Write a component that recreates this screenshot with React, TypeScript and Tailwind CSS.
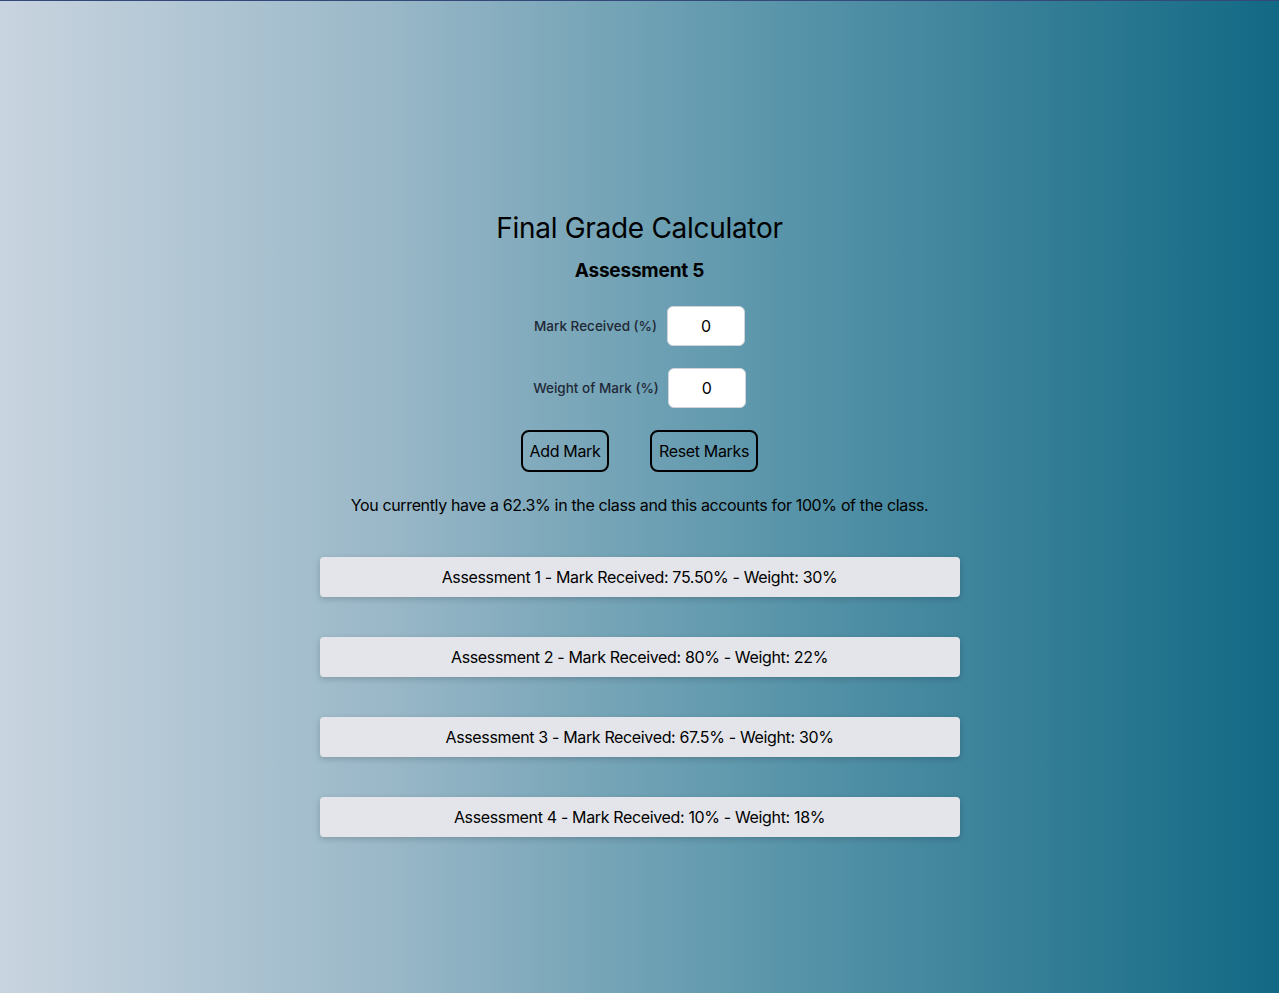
import { useState } from "react";

type Mark = { name: string; mark: string; weight: string };

const marks: Mark[] = [
  { name: "Assessment 1", mark: "75.50", weight: "30" },
  { name: "Assessment 2", mark: "80", weight: "22" },
  { name: "Assessment 3", mark: "67.5", weight: "30" },
  { name: "Assessment 4", mark: "10", weight: "18" },
];

export default function App() {
  const [received, setReceived] = useState("0");
  const [weight, setWeight] = useState("0");

  return (
    <div
      className="flex min-h-screen flex-col items-center border-t border-[#34497a] bg-[linear-gradient(to_right,#c8d4df,#9ab8c8_30%,#5b96ab_60%,#126984)] pt-[210px] pb-20 text-black"
      style={{ fontFamily: "Inter, 'Noto Sans', 'Liberation Sans', sans-serif" }}
    >
      <h1 className="text-[28px] leading-[34px] font-normal tracking-[-0.3px]">Final Grade Calculator</h1>
      <h2 className="mt-3 text-[19px] leading-[28px] font-bold tracking-[-0.2px]">Assessment 5</h2>

      <div className="mt-[21px] flex items-center gap-[10px]">
        <label className="text-[13.5px] font-medium text-[#1f2937]">Mark Received (%)</label>
        <input
          value={received}
          onChange={(e) => setReceived(e.target.value)}
          className="h-10 w-[78px] rounded-md border border-[#d1d5db] bg-white text-center text-base outline-none"
        />
      </div>

      <div className="mt-[22px] flex items-center gap-[9px]">
        <label className="text-[13.5px] font-medium text-[#1f2937]">Weight of Mark (%)</label>
        <input
          value={weight}
          onChange={(e) => setWeight(e.target.value)}
          className="h-10 w-[78px] rounded-md border border-[#d1d5db] bg-white text-center text-base outline-none"
        />
      </div>

      <div className="mt-[22px] flex gap-[41px] tracking-[-0.35px]">
        <button className="h-[42px] w-[88px] rounded-lg border-2 border-black text-base">Add Mark</button>
        <button className="h-[42px] w-[108px] rounded-lg border-2 border-black text-base">Reset Marks</button>
      </div>

      <p className="mt-[21px] text-base leading-6 tracking-[-0.35px]">
        You currently have a 62.3% in the class and this accounts for 100% of the class.
      </p>

      <ul className="mt-10 flex w-[640px] flex-col gap-10 tracking-[-0.35px]">
        {marks.map((m) => (
          <li
            key={m.name}
            className="flex h-10 items-center justify-center rounded bg-[#e4e5ea] text-base shadow-[0_2px_6px_rgba(0,0,0,0.18)]"
          >
            {m.name} - Mark Received: {m.mark}% - Weight: {m.weight}%
          </li>
        ))}
      </ul>
    </div>
  );
}
